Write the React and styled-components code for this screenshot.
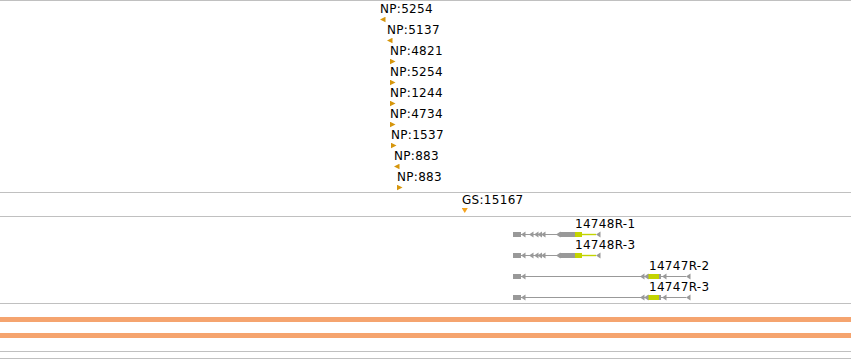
import React from "react";
import styled, { createGlobalStyle } from "styled-components";

const GlobalStyle = createGlobalStyle`
  html, body {
    margin: 0;
    padding: 0;
    background: #fff;
  }
  body {
    font-family: "DejaVu Sans", "Liberation Sans", sans-serif;
    font-size: 12px;
    letter-spacing: 0.3px;
    color: #000;
  }
`;

const Browser = styled.div`
  width: 851px;
  border-top: 1px solid #c0c0c0;
  overflow: hidden;
`;

const Track = styled.div`
  display: flex;
  flex-direction: column;
  height: ${(p) => p.$height}px;
  padding-top: ${(p) => p.$padTop || 0}px;
  box-sizing: border-box;
  border-bottom: 1px solid #c0c0c0;
  gap: ${(p) => p.$gap || 0}px;
`;

const FeatureRow = styled.div`
  display: flex;
  flex-direction: column;
  align-items: flex-start;
  height: 21px;
`;

const Label = styled.span`
  display: block;
  height: 14px;
  line-height: 14px;
  white-space: nowrap;
`;

const Marker = styled.svg`
  display: block;
  margin-top: 1px;
  width: 6px;
  height: 6px;
`;

const GeneGlyph = styled.svg`
  display: block;
  width: 851px;
  height: 7px;
`;

const Band = styled.div`
  height: 5px;
  background: #f5a46f;
`;

const npFeatures = [
  { label: "NP:5254", x: 380, dir: "left" },
  { label: "NP:5137", x: 387, dir: "left" },
  { label: "NP:4821", x: 390, dir: "right" },
  { label: "NP:5254", x: 390, dir: "right" },
  { label: "NP:1244", x: 390, dir: "right" },
  { label: "NP:4734", x: 390, dir: "right" },
  { label: "NP:1537", x: 391, dir: "right" },
  { label: "NP:883", x: 394, dir: "left" },
  { label: "NP:883", x: 397, dir: "right" },
];

const trianglePoints = {
  left: "0,2.5 5.5,-0.3 5.5,5.3",
  right: "0,-0.3 5.5,2.5 0,5.3",
  down: "-0.3,0 5.8,0 2.75,5",
};

function Triangle({ dir, color }) {
  return (
    <Marker viewBox="0 0 6 6">
      <polygon points={trianglePoints[dir]} fill={color} />
    </Marker>
  );
}

const GRAY = "#999";
const LIME = "#c3d400";

// transcript models: thin intron line, exon blocks, small left-pointing arrows
const transcripts = [
  {
    label: "14748R-1",
    labelX: 575,
    line: [521, 596],
    blocks: [
      [513, 8, GRAY],
      [560, 15, GRAY],
      [575, 7, LIME],
    ],
    utr: [582, 596],
    arrows: [521, 529, 534, 537.5, 541, 556, 596],
  },
  {
    label: "14748R-3",
    labelX: 575,
    line: [521, 596],
    blocks: [
      [513, 8, GRAY],
      [560, 15, GRAY],
      [575, 7, LIME],
    ],
    utr: [582, 596],
    arrows: [521, 529, 534, 537.5, 541, 556, 596],
  },
  {
    label: "14747R-2",
    labelX: 649,
    line: [521, 686],
    blocks: [
      [513, 8, GRAY],
      [648, 11, LIME],
      [659, 2, GRAY],
    ],
    arrows: [521, 640, 644, 662, 686],
  },
  {
    label: "14747R-3",
    labelX: 649,
    line: [521, 686],
    blocks: [
      [513, 8, GRAY],
      [648, 11, LIME],
      [659, 2, GRAY],
    ],
    arrows: [521, 640, 644, 662, 686],
  },
];

function Transcript({ t }) {
  return (
    <FeatureRow>
      <Label style={{ marginLeft: t.labelX }}>{t.label}</Label>
      <GeneGlyph viewBox="0 0 851 7">
        <line x1={t.line[0]} y1="3.5" x2={t.line[1]} y2="3.5" stroke={GRAY} strokeWidth="1.2" />
        {t.utr && (
          <line x1={t.utr[0]} y1="3.5" x2={t.utr[1]} y2="3.5" stroke={LIME} strokeWidth="1.4" />
        )}
        {t.blocks.map(([x, w, c], i) => (
          <rect key={i} x={x} y="1" width={w} height="5" fill={c} />
        ))}
        {t.arrows.map((x, i) => (
          <polygon key={i} points={`${x},3.5 ${x + 4.5},0.5 ${x + 4.5},6.5`} fill={GRAY} />
        ))}
      </GeneGlyph>
    </FeatureRow>
  );
}

export default function App() {
  return (
    <>
      <GlobalStyle />
      <Browser>
        <Track $height={192} $padTop={1}>
          {npFeatures.map((f, i) => (
            <FeatureRow key={i} style={{ paddingLeft: f.x }}>
              <Label>{f.label}</Label>
              <Triangle dir={f.dir} color="#d6960c" />
            </FeatureRow>
          ))}
        </Track>
        <Track $height={24}>
          <FeatureRow style={{ paddingLeft: 462 }}>
            <Label>GS:15167</Label>
            <Triangle dir="down" color="#f5a31f" />
          </FeatureRow>
        </Track>
        <Track $height={87}>
          {transcripts.map((t, i) => (
            <Transcript key={i} t={t} />
          ))}
        </Track>
        <Track $height={48} $padTop={13} $gap={11}>
          <Band />
          <Band />
        </Track>
        <Track $height={7} />
      </Browser>
    </>
  );
}
